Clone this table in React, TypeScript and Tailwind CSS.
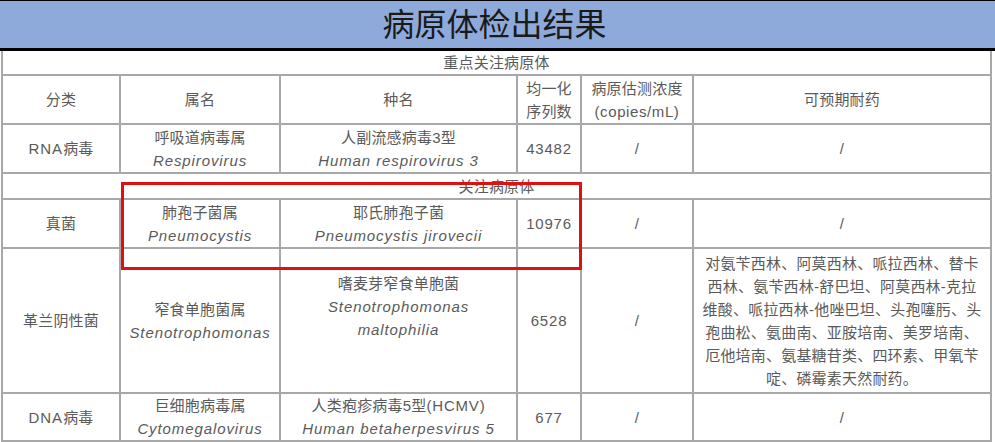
import React from 'react'

const font = { fontFamily: '"Liberation Sans", "Noto Sans CJK SC", sans-serif' }

const cell = 'bg-white flex flex-col items-center justify-center text-center text-[15px] leading-[23px] text-[#5a5a5a] tracking-[0.2px]'
const latin = 'italic tracking-[0.9px]'

function Name({ cn, en }: { cn: string; en: string }) {
  return (
    <div className={cell}>
      <div>{cn}</div>
      <div className={latin}>{en}</div>
    </div>
  )
}

export default function App() {
  return (
    <div className="relative w-[995px] h-[442px] bg-white overflow-hidden" style={font}>
      <div className="h-[51px] border-t border-b-[3px] border-black bg-[#8eaadb] flex items-center justify-center">
        <span className="text-[32px] leading-none text-[#1a1a1a] -translate-x-[3px]">病原体检出结果</span>
      </div>

      <div className="ml-[1px] w-fit grid grid-cols-[116px_158px_235px_62px_110px_296px] grid-rows-[23px_47px_47px_24px_47px_143px_46px] gap-[2px] px-[2px] pb-[2px] bg-[#a8a8a8]">
        <div className={`${cell} col-span-6`}>重点关注病原体</div>

        <div className={cell}>分类</div>
        <div className={cell}>属名</div>
        <div className={cell}>种名</div>
        <div className={cell}>
          <div>均一化</div>
          <div>序列数</div>
        </div>
        <div className={cell}>
          <div>病原估测浓度</div>
          <div className="tracking-[0.6px]">(copies/mL)</div>
        </div>
        <div className={cell}>可预期耐药</div>

        <div className={cell}><span><span className="tracking-[1px]">RNA</span>病毒</span></div>
        <Name cn="呼吸道病毒属" en="Respirovirus" />
        <Name cn="人副流感病毒3型" en="Human respirovirus 3" />
        <div className={`${cell} tracking-[0.8px]`}>43482</div>
        <div className={cell}>/</div>
        <div className={cell}>/</div>

        <div className={`${cell} col-span-6`}>关注病原体</div>

        <div className={cell}>真菌</div>
        <Name cn="肺孢子菌属" en="Pneumocystis" />
        <Name cn="耶氏肺孢子菌" en="Pneumocystis jirovecii" />
        <div className={`${cell} tracking-[0.8px]`}>10976</div>
        <div className={cell}>/</div>
        <div className={cell}>/</div>

        <div className={cell}>革兰阴性菌</div>
        <Name cn="窄食单胞菌属" en="Stenotrophomonas" />
        <div className={`${cell} justify-start pt-[23px]`}>
          <div>嗜麦芽窄食单胞菌</div>
          <div className={latin}>Stenotrophomonas</div>
          <div className={latin}>maltophilia</div>
        </div>
        <div className={`${cell} tracking-[0.8px]`}>6528</div>
        <div className={cell}>/</div>
        <div className={cell}>
          <div>对氨苄西林、阿莫西林、哌拉西林、替卡</div>
          <div>西林、氨苄西林-舒巴坦、阿莫西林-克拉</div>
          <div>维酸、哌拉西林-他唑巴坦、头孢噻肟、头</div>
          <div>孢曲松、氨曲南、亚胺培南、美罗培南、</div>
          <div>厄他培南、氨基糖苷类、四环素、甲氧苄</div>
          <div>啶、磷霉素天然耐药。</div>
        </div>

        <div className={cell}><span><span className="tracking-[1px]">DNA</span>病毒</span></div>
        <Name cn="巨细胞病毒属" en="Cytomegalovirus" />
        <div className={cell}>
          <div>人类疱疹病毒5型<span className="tracking-[0.8px]">(HCMV)</span></div>
          <div className={latin}>Human betaherpesvirus 5</div>
        </div>
        <div className={`${cell} tracking-[0.8px]`}>677</div>
        <div className={cell}>/</div>
        <div className={cell}>/</div>
      </div>

      {/* highlight box */}
      <div className="absolute left-[121px] top-[182px] w-[461px] h-[88px] border-[3px] border-[#e01010]" />
    </div>
  )
}
